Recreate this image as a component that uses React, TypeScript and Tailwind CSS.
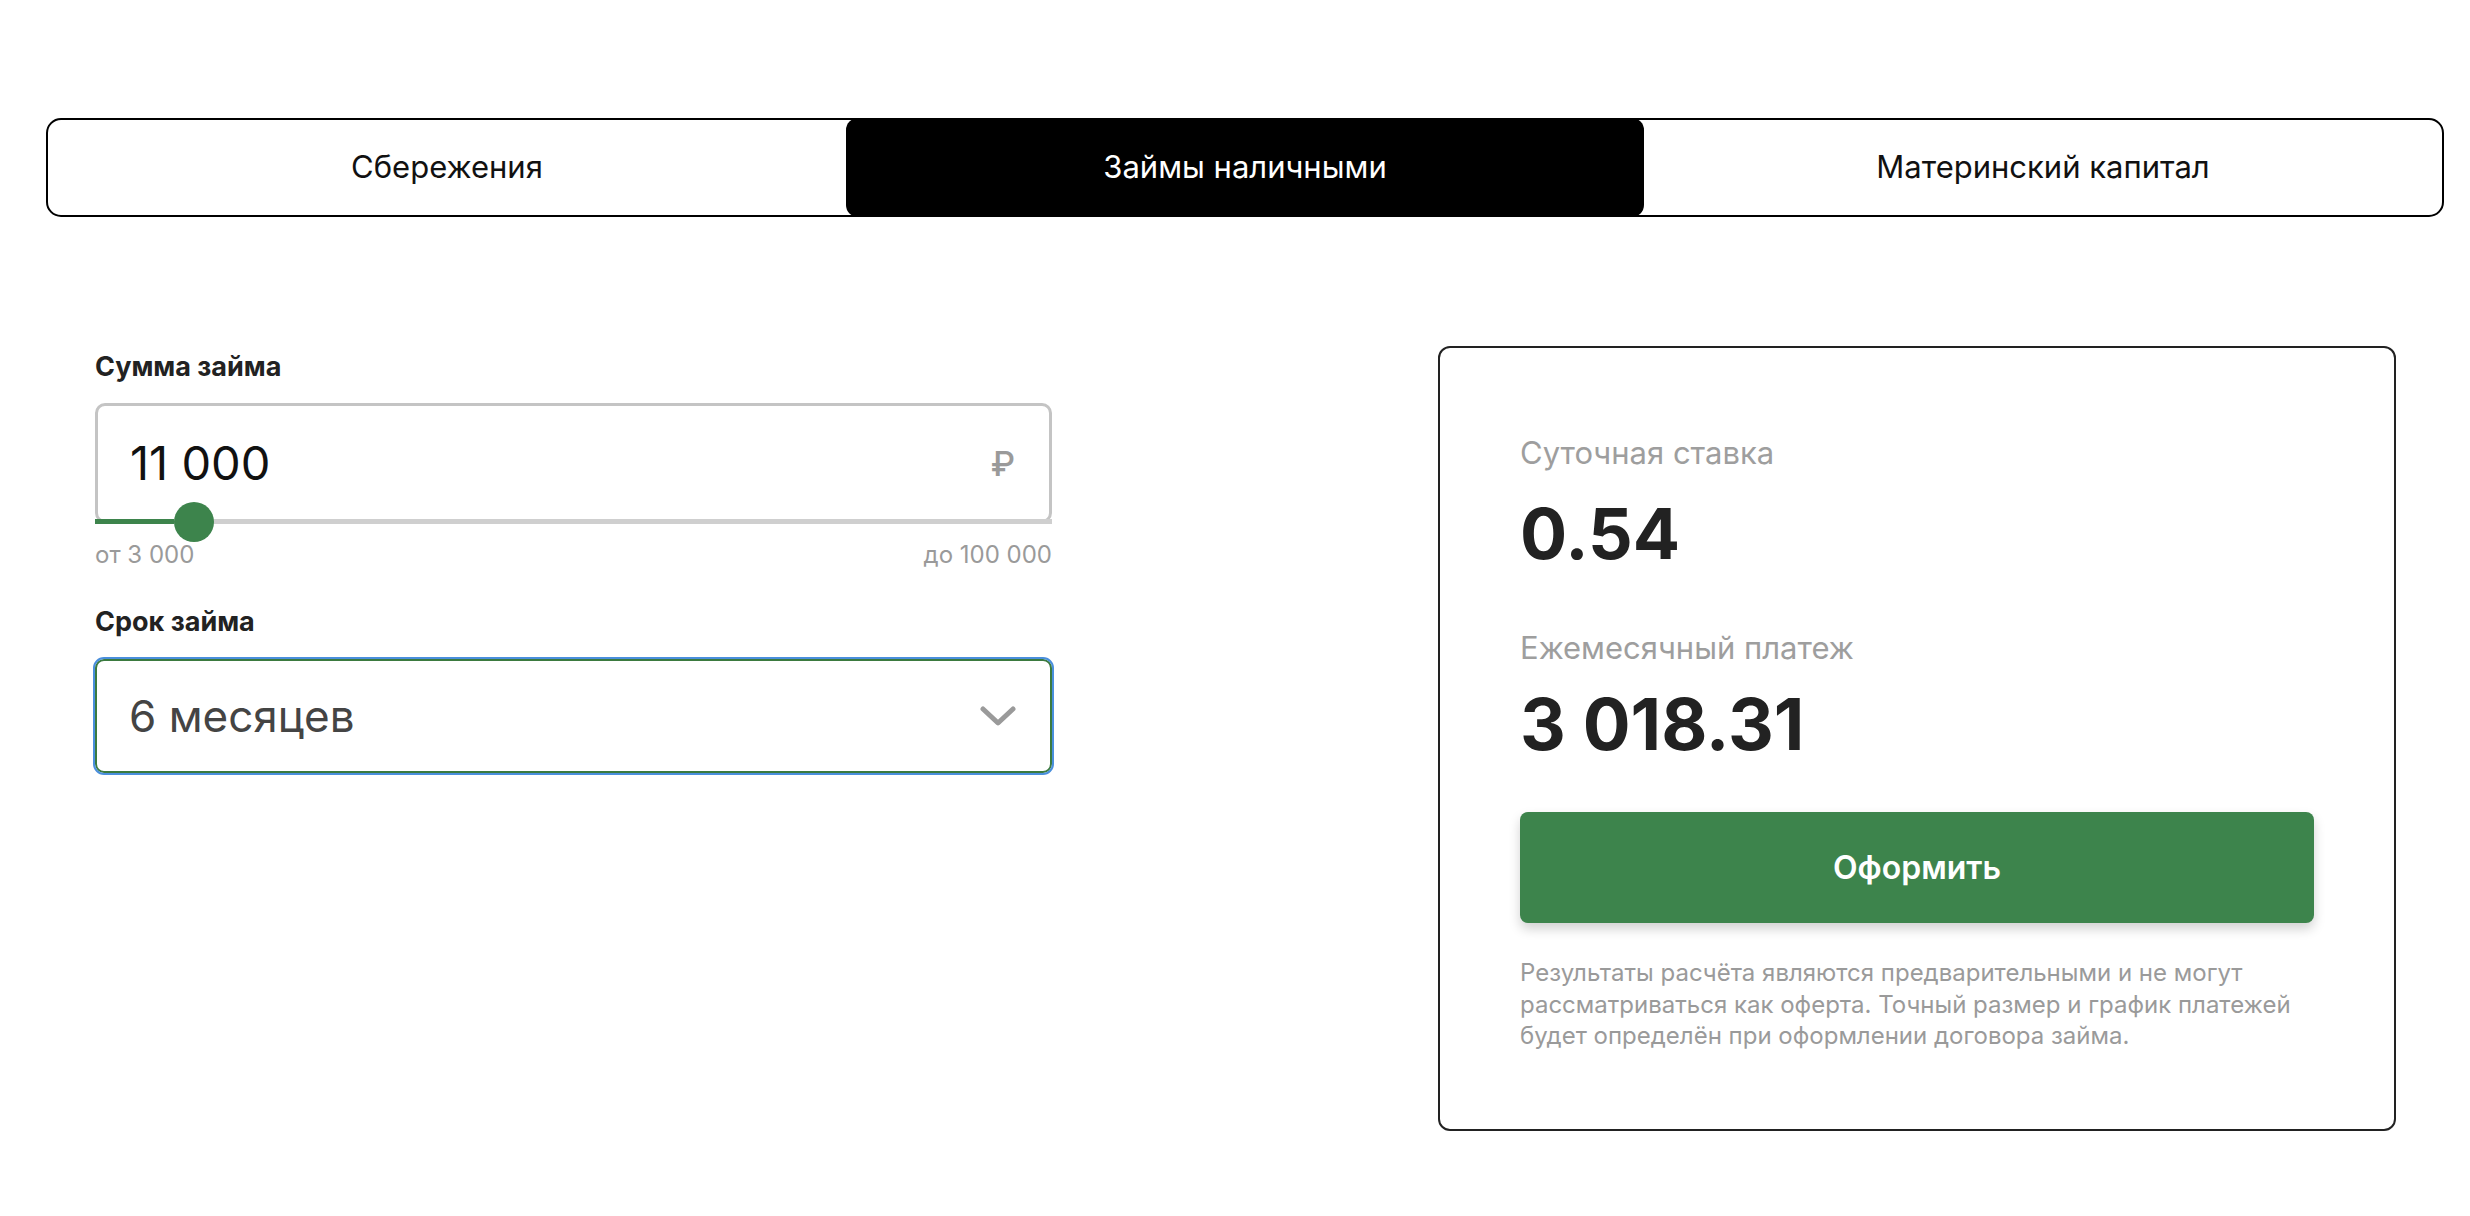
import React, { useState } from "react";

const tabs = ["Сбережения", "Займы наличными", "Материнский капитал"];

const MIN = 3000;
const MAX = 100000;

function formatNumber(n: number) {
  return n.toLocaleString("ru-RU").replace(/\u00a0/g, " ");
}

function Tabs({ active, onChange }: { active: number; onChange: (i: number) => void }) {
  return (
    <div className="grid grid-cols-3 h-[99px] border-2 border-black rounded-[15px]">
      {tabs.map((t, i) => (
        <button
          key={t}
          onClick={() => onChange(i)}
          className={
            i === active
              ? "flex items-center justify-center rounded-[12px] bg-black text-white text-[31px] -my-[2px]"
              : "flex items-center justify-center text-[#111] text-[31px]"
          }
        >
          {t}
        </button>
      ))}
    </div>
  );
}

function AmountField({ value }: { value: number }) {
  const pct = ((value - MIN) / (MAX - MIN)) * 100;
  return (
    <div>
      <div className="text-[27px] leading-[32px] font-bold text-[#222]">Сумма займа</div>
      <div className="relative mt-[20px]">
        <div className="flex items-center justify-between h-[120px] border-[3px] border-[#c4c4c4] rounded-[10px] pl-[32px] pr-[34px]">
          <span className="text-[47px] text-[#111]">{formatNumber(value)}</span>
          <span className="text-[34px] text-[#9a9a9a] font-medium">₽</span>
        </div>
        {/* slider track sits on the bottom edge of the field */}
        <div className="absolute left-0 right-0 bottom-[-1px] h-[5px] bg-[#cfcfcf]">
          <div className="h-full bg-[#3d844c]" style={{ width: `${pct}%` }} />
          <div
            className="absolute top-1/2 w-[40px] h-[40px] -mt-[20px] rounded-full bg-[#3d844c]"
            style={{ left: `${pct}%` }}
          />
        </div>
      </div>
      <div className="flex justify-between mt-[18px] text-[24px] leading-[28px] text-[#9a9a9a]">
        <span>от 3 000</span>
        <span>до 100 000</span>
      </div>
    </div>
  );
}

function TermField() {
  return (
    <div className="mt-[37px]">
      <div className="text-[27px] leading-[32px] font-bold text-[#222]">Срок займа</div>
      <div className="mt-[21px] flex items-center justify-between h-[114px] border-2 border-[#3b7a3f] rounded-[9px] outline-2 outline-[#4a8fdc] pl-[32px] pr-[34px]">
        <span className="text-[44px] text-[#444]">6 месяцев</span>
        <svg width="36" height="20" viewBox="0 0 36 20" fill="none">
          <path d="M3 3l15 14L33 3" stroke="#9a9a9a" strokeWidth="5" strokeLinecap="round" strokeLinejoin="round" />
        </svg>
      </div>
    </div>
  );
}

function ResultCard() {
  return (
    <div className="w-[958px] border-2 border-[#222] rounded-[12px] pt-[87px] pb-[77px] px-[80px]">
      <div className="text-[31px] leading-[36px] text-[#9e9e9e]">Суточная ставка</div>
      <div className="mt-[27px] text-[70px] leading-[72px] font-bold text-[#222]">0.54</div>
      <div className="mt-[60px] text-[31px] leading-[36px] text-[#9e9e9e]">Ежемесячный платеж</div>
      <div className="mt-[22px] text-[71px] leading-[72px] font-bold text-[#222]">3 018.31</div>
      <button className="mt-[52px] w-full h-[111px] rounded-[8px] bg-[#3d844c] text-white text-[32px] font-semibold shadow-[0_6px_12px_rgba(0,0,0,0.18)]">
        Оформить
      </button>
      <p className="mt-[34px] text-[24px] leading-[31.5px] text-[#9a9a9a]">
        Результаты расчёта являются предварительными и не могут рассматриваться как оферта.
        Точный размер и график платежей будет определён при оформлении договора займа.
      </p>
    </div>
  );
}

export default function App() {
  const [active, setActive] = useState(1);
  return (
    <div className="min-h-screen bg-white font-['Inter','Noto_Sans',sans-serif]">
      <div className="pl-[46px] pr-[26px] pt-[118px]">
        <Tabs active={active} onChange={setActive} />
        <div className="flex justify-between items-start mt-[129px] pl-[49px] pr-[48px]">
          <div className="w-[957px] mt-[5px]">
            <AmountField value={11000} />
            <TermField />
          </div>
          <ResultCard />
        </div>
      </div>
    </div>
  );
}
